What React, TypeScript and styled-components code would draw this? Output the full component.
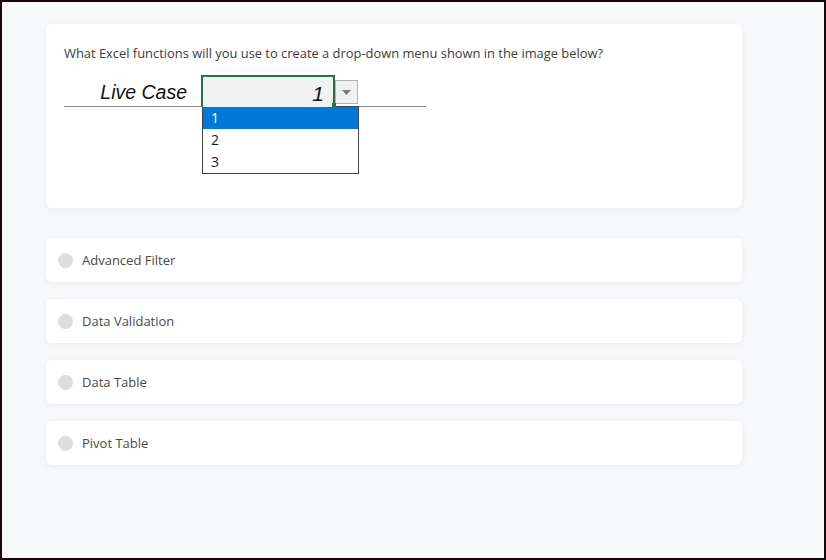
import React from "react";
import styled, { createGlobalStyle } from "styled-components";

const GlobalStyle = createGlobalStyle`
  html, body {
    margin: 0;
    padding: 0;
  }
  body {
    font-family: "Open Sans", "Noto Sans", sans-serif;
  }
  * {
    box-sizing: border-box;
  }
`;

const options = ["Advanced Filter", "Data Validation", "Data Table", "Pivot Table"];
const listItems = ["1", "2", "3"];

const App: React.FC = () => {
  return (
    <>
      <GlobalStyle />
      <Frame>
        <QuestionCard>
          <QuestionText>
            What Excel functions will you use to create a drop-down menu shown in the image below?
          </QuestionText>
          <Sheet>
            <SheetRow>
              <SheetLabel>Live Case</SheetLabel>
              <Cell>
                1
                <FillHandle />
              </Cell>
              <DropButton>
                <svg width="9" height="5" viewBox="0 0 9 5">
                  <path d="M0 0 L9 0 L4.5 5 Z" fill="#7a7a7a" />
                </svg>
              </DropButton>
            </SheetRow>
            <DropList>
              {listItems.map((item, i) => (
                <DropItem key={item} $active={i === 0}>
                  {item}
                </DropItem>
              ))}
            </DropList>
          </Sheet>
        </QuestionCard>

        <Options>
          {options.map((label) => (
            <OptionCard key={label}>
              <Radio />
              <OptionLabel>{label}</OptionLabel>
            </OptionCard>
          ))}
        </Options>
      </Frame>
    </>
  );
};

export default App;

const Frame = styled.div`
  width: 826px;
  height: 560px;
  border: 2px solid #160808;
  background: #f7f8fa;
  padding: 22px 0 0 44px;
  display: flex;
  flex-direction: column;
  overflow: hidden;
`;

const Card = styled.div`
  width: 696px;
  background: #ffffff;
  border-radius: 6px;
  box-shadow: 0 1px 6px rgba(20, 30, 60, 0.06);
`;

const QuestionCard = styled(Card)`
  height: 184px;
  padding: 20px 18px 0 18px;
`;

const QuestionText = styled.div`
  font-size: 12.9px;
  line-height: 18px;
  color: #3c3c3c;
`;

const Sheet = styled.div`
  margin-top: 13px;
  width: 362px;
`;

const SheetRow = styled.div`
  display: flex;
  align-items: flex-start;
  height: 32px;
  border-bottom: 1px solid #8c8c8c;
`;

const SheetLabel = styled.div`
  width: 137px;
  height: 31px;
  padding-right: 14px;
  text-align: right;
  font-family: "Liberation Sans", Arial, sans-serif;
  font-style: italic;
  font-size: 19.5px;
  line-height: 34px;
  color: #111;
`;

const Cell = styled.div`
  position: relative;
  width: 134px;
  height: 32px;
  background: #f2f2f2;
  border: 2px solid #217346;
  border-bottom: none;
  padding-right: 9px;
  text-align: right;
  font-family: "Liberation Sans", Arial, sans-serif;
  font-style: italic;
  font-size: 21px;
  line-height: 34px;
  color: #111;
`;

const FillHandle = styled.span`
  position: absolute;
  right: -3px;
  bottom: 0;
  width: 4px;
  height: 4px;
  background: #217346;
`;

const DropButton = styled.div`
  margin-top: 5px;
  width: 23px;
  height: 24px;
  background: #f0f0f0;
  border: 1px solid #b3b3b3;
  display: flex;
  align-items: center;
  justify-content: center;
`;

const DropList = styled.div`
  margin-left: 138px;
  margin-top: -1px;
  width: 157px;
  border: 1px solid #444;
  background: #fff;
`;

const DropItem = styled.div<{ $active?: boolean }>`
  height: 22px;
  padding-left: 8px;
  font-size: 14px;
  line-height: 22px;
  color: ${(p) => (p.$active ? "#ffffff" : "#1a1a1a")};
  background: ${(p) => (p.$active ? "#0078d7" : "transparent")};
`;

const Options = styled.div`
  margin-top: 30px;
  display: flex;
  flex-direction: column;
  gap: 17px;
`;

const OptionCard = styled(Card)`
  height: 44px;
  display: flex;
  align-items: center;
  padding-left: 12px;
  gap: 9px;
`;

const Radio = styled.span`
  width: 15px;
  height: 15px;
  border-radius: 50%;
  background: #dcdde0;
  flex-shrink: 0;
`;

const OptionLabel = styled.span`
  font-size: 13px;
  color: #4a4a4a;
`;
